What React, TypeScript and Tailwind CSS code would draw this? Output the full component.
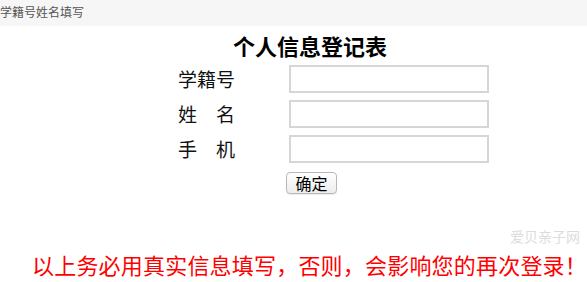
import React from "react";

const font = { fontFamily: '"Noto Sans CJK SC", "Noto Sans", sans-serif' };

const fields = [
  { label: ["学籍号"], name: "xh" },
  { label: ["姓", "名"], name: "xm" },
  { label: ["手", "机"], name: "sj" },
];

export default function App() {
  return (
    <div
      className="relative w-[587px] h-[282px] overflow-hidden bg-white font-['Noto_Sans_CJK_SC',sans-serif]"
      style={font}
    >
      {/* 页面标题栏 */}
      <div className="h-[26px] bg-[#f6f6f6] pt-[4px] text-[12px] leading-[16px] text-[#555]">
        学籍号姓名填写
      </div>

      <h1 className="mt-[5px] pl-[233px] text-[22px] font-bold leading-[28px] text-black">
        个人信息登记表
      </h1>

      <form className="mt-[6px] flex flex-col gap-[7px] pl-[178px]">
        {fields.map((f) => (
          <div key={f.name} className="flex items-center">
            <div className="flex w-[57px] justify-between text-[19px] leading-[28px] text-[#111]">
              {f.label.map((c) => (
                <span key={c}>{c}</span>
              ))}
            </div>
            <input
              name={f.name}
              className="ml-[54px] h-[28px] w-[200px] border-2 border-[#d6d6d6] bg-white outline-none"
            />
          </div>
        ))}
      </form>

      <div className="mt-[8px] pl-[286px]">
        <button className="h-[22px] w-[51px] rounded-[4px] border border-[#b8b8b8] bg-gradient-to-b from-white to-[#ededed] text-[16px] leading-[20px] text-black shadow-[0_1px_1px_rgba(0,0,0,0.08)]">
          确定
        </button>
      </div>

      <p className="mt-[56px] pl-[32px] text-[22px] leading-[26px] tracking-[0.2px] text-[#ff0000] whitespace-nowrap">
        以上务必用真实信息填写，否则，会影响您的再次登录！
      </p>

      {/* 水印 */}
      <div className="absolute left-[510px] top-[229px] text-[14px] leading-[14px] text-[#dcdcdc]">
        爱贝亲子网
      </div>
    </div>
  );
}
